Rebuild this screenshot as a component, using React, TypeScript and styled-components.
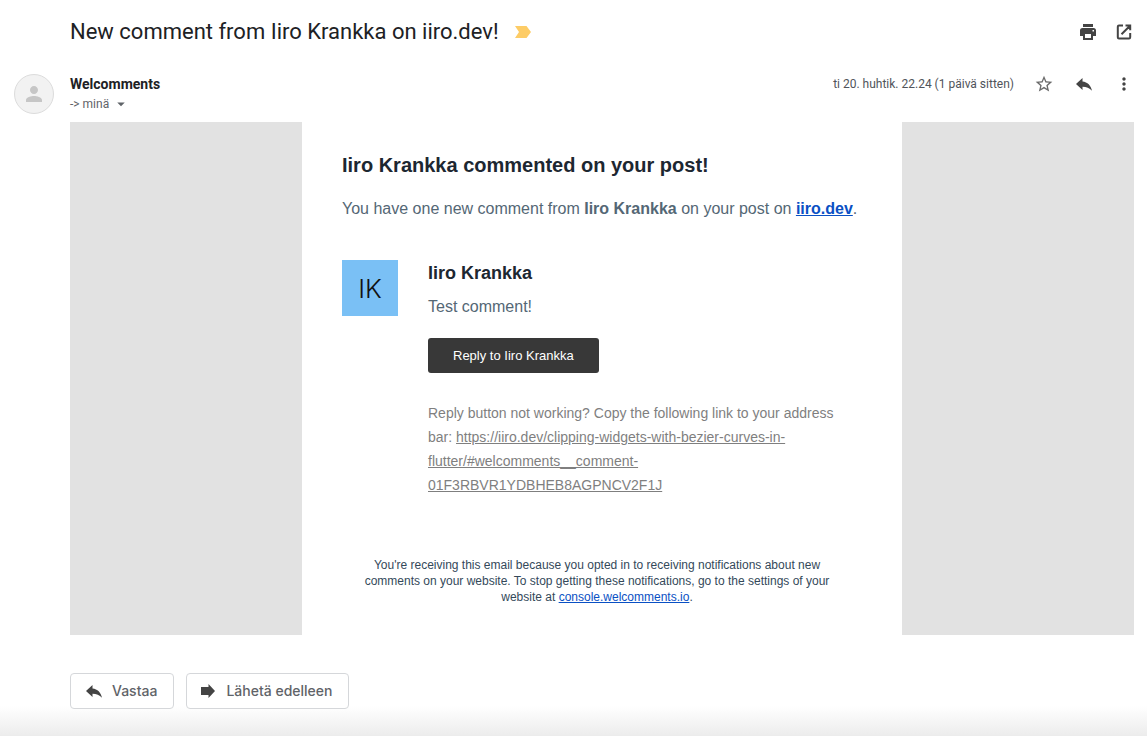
import React from "react";
import styled, { createGlobalStyle } from "styled-components";
import { MdArrowDropDown, MdMoreVert, MdPerson, MdStarBorder } from "react-icons/md";

const GlobalStyle = createGlobalStyle`
  *, *::before, *::after { box-sizing: border-box; }
  body {
    margin: 0;
    background: #fff;
    color: #202124;
    font-family: Roboto, "Liberation Sans", sans-serif;
  }
  h1, h2, h3, p { margin: 0; }
`;

const Page = styled.main`
  min-height: 100vh;
  display: flex;
  flex-direction: column;
`;

const SubjectBar = styled.header`
  display: flex;
  align-items: center;
  justify-content: space-between;
  padding: 16px 13px 0 70px;
`;

const Subject = styled.div`
  display: flex;
  align-items: center;
  gap: 16px;
`;

const SubjectText = styled.h1`
  font-size: 22px;
  font-weight: 400;
  line-height: 32px;
`;

const Actions = styled.div<{ $gap: number }>`
  display: flex;
  align-items: center;
  gap: ${(p) => p.$gap}px;
`;

const IconButton = styled.button`
  display: flex;
  padding: 0;
  border: 0;
  background: none;
  color: #444;
  cursor: pointer;
`;

const StarButton = styled(IconButton)`
  color: #6a6a6a;
`;

const Message = styled.article`
  display: grid;
  grid-template-columns: 40px minmax(0, 1fr);
  column-gap: 16px;
  padding: 26px 13px 0 14px;
`;

const Avatar = styled.div`
  display: flex;
  align-items: center;
  justify-content: center;
  width: 40px;
  height: 40px;
  border: 1px solid #dcdcdc;
  border-radius: 50%;
  background: #f2f2f2;
  color: #c6c6c6;
`;

const MessageHead = styled.div`
  display: flex;
  justify-content: space-between;
  align-items: flex-start;
  height: 48px;
`;

const Sender = styled.h2`
  font-size: 14px;
  font-weight: 700;
  line-height: 20px;
`;

const Recipient = styled.button`
  display: flex;
  align-items: center;
  gap: 3px;
  padding: 0;
  border: 0;
  background: none;
  color: #5f6368;
  font: 400 12px/20px Roboto, sans-serif;
  cursor: pointer;
`;

const Meta = styled.div`
  display: flex;
  align-items: center;
  gap: 20px;
  height: 20px;
`;

const DateText = styled.time`
  color: #50545a;
  font-size: 12px;
  line-height: 20px;
`;

const MailCanvas = styled.div`
  display: flex;
  justify-content: center;
  background: #e2e2e2;
  font-family: "Liberation Sans", Arial, sans-serif;
`;

const MailBody = styled.div`
  width: 100%;
  max-width: 600px;
  padding: 28px 40px 30px;
  background: #fff;
`;

const MailTitle = styled.h1`
  color: #1d2731;
  font-size: 20px;
  line-height: 30px;
`;

const Copy = styled.p`
  color: #546775;
  font-size: 16px;
  line-height: 24px;
`;

const Intro = styled(Copy)`
  margin-top: 17px;
`;

const Link = styled.a`
  color: #0a50c4;
`;

const Comment = styled.section`
  display: grid;
  grid-template-columns: 56px minmax(0, 1fr);
  column-gap: 30px;
  padding: 39px 18px 0 0;
`;

const Initials = styled.div`
  display: flex;
  align-items: center;
  justify-content: center;
  height: 56px;
  padding-top: 2px;
  background: #7ac0f5;
  color: #111;
  font: 300 26px/32px Inter, sans-serif;
`;

const Author = styled.h3`
  color: #1d2731;
  font-size: 18px;
  line-height: 26px;
`;

const CommentText = styled(Copy)`
  margin-top: 9px;
`;

const ReplyLink = styled.a`
  display: inline-block;
  margin-top: 19px;
  padding: 0 25px;
  border-radius: 3px;
  background: #383838;
  color: #fff;
  font-size: 13px;
  line-height: 35px;
  text-decoration: none;
`;

const Fallback = styled.p`
  margin-top: 28px;
  color: #7f7f7f;
  font-size: 14px;
  line-height: 24px;

  a { color: inherit; }
`;

const Footnote = styled.p`
  margin-top: 60px;
  padding: 0 25px 0 15px;
  color: #34495a;
  font-size: 12px;
  line-height: 16px;
  text-align: center;
`;

const Footer = styled.footer`
  display: flex;
  flex: 1;
  align-items: flex-start;
  gap: 12px;
  padding: 38px 13px 27px 70px;
  background: linear-gradient(to top, #ececec, #fff 30px);
`;

const ActionButton = styled.button`
  display: flex;
  align-items: center;
  gap: 8px;
  height: 36px;
  padding: 0 16px 0 13px;
  border: 1px solid #d5d7da;
  border-radius: 4px;
  background: #fff;
  color: #5f6368;
  font: 500 14px/20px Inter, sans-serif;
  cursor: pointer;
`;

const PrintIcon = () => (
  <svg width="20" height="20" viewBox="0 0 20 20" fill="#444" fillRule="evenodd" aria-hidden="true">
    <path d="M5 2h10v3H5zM4.500 6h11A2.500 2.500 0 0 1 18 8.500V14h-3v4H5v-4H2V8.500A2.500 2.500 0 0 1 4.500 6zM7 12v4h6v-4zM14.500 8v1.500H16V8z" />
  </svg>
);

const OpenIcon = () => (
  <svg width="20" height="20" viewBox="0 0 20 20" fill="none" stroke="#444" strokeWidth="2" aria-hidden="true">
    <path d="M9 3.500H5A1.200 1.200 0 0 0 3.800 4.700v10.600A1.200 1.200 0 0 0 5 16.500h10a1.200 1.200 0 0 0 1.200-1.200V11M11.500 3.500h4.700v4.700M16 3.700 7.500 12.200" />
  </svg>
);

const ReplyIcon = () => (
  <svg width="20" height="20" viewBox="0 0 20 20" fill="#444" aria-hidden="true">
    <path d="M2 10 8.500 4v3.500C13.500 8 17 11.500 18 16.800c-2.500-2.700-5.500-4-9.500-4V16z" />
  </svg>
);

const ForwardIcon = () => (
  <svg width="18" height="20" viewBox="0 0 18 20" fill="#444" aria-hidden="true">
    <path d="M1 6h7.500V3l6.500 7-6.500 7v-3H1z" />
  </svg>
);

const ImportantIcon = () => (
  <svg width="16" height="12" viewBox="0 0 16 12" fill="#fdcc66" role="img" aria-label="Tärkeä">
    <path d="M0 0h11.500L16 6l-4.500 6H0l4-6z" />
  </svg>
);

export default function App() {
  return (
    <Page>
      <GlobalStyle />
      <SubjectBar>
        <Subject>
          <SubjectText>New comment from Iiro Krankka on iiro.dev!</SubjectText>
          <ImportantIcon />
        </Subject>
        <Actions $gap={16}>
          <IconButton aria-label="Tulosta"><PrintIcon /></IconButton>
          <IconButton aria-label="Avaa uudessa ikkunassa"><OpenIcon /></IconButton>
        </Actions>
      </SubjectBar>

      <Message>
        <Avatar><MdPerson size={24} /></Avatar>
        <div>
          <MessageHead>
            <div>
              <Sender>Welcomments</Sender>
              <Recipient>-&gt; minä <MdArrowDropDown size={18} /></Recipient>
            </div>
            <Meta>
              <DateText>ti 20. huhtik. 22.24 (1 päivä sitten)</DateText>
              <Actions $gap={20}>
                <StarButton aria-label="Lisää tähti"><MdStarBorder size={20} /></StarButton>
                <IconButton aria-label="Vastaa"><ReplyIcon /></IconButton>
                <IconButton aria-label="Lisää"><MdMoreVert size={20} /></IconButton>
              </Actions>
            </Meta>
          </MessageHead>

          <MailCanvas>
            <MailBody>
              <MailTitle>Iiro Krankka commented on your post!</MailTitle>
              <Intro>
                You have one new comment from <strong>Iiro Krankka</strong> on your post on{" "}
                <Link href="#post"><strong>iiro.dev</strong></Link>.
              </Intro>
              <Comment>
                <Initials>IK</Initials>
                <div>
                  <Author>Iiro Krankka</Author>
                  <CommentText>Test comment!</CommentText>
                  <ReplyLink href="#reply">Reply to Iiro Krankka</ReplyLink>
                  <Fallback>
                    Reply button not working? Copy the following link to your address bar:{" "}
                    <a href="#comment">
                      https://iiro.dev/clipping-widgets-with-bezier-curves-in-flutter/#welcomments__comment-01F3RBVR1YDBHEB8AGPNCV2F1J
                    </a>
                  </Fallback>
                </div>
              </Comment>
              <Footnote>
                You're receiving this email because you opted in to receiving notifications about new comments on your
                website. To stop getting these notifications, go to the settings of your website at{" "}
                <Link href="#console">console.welcomments.io</Link>.
              </Footnote>
            </MailBody>
          </MailCanvas>
        </div>
      </Message>

      <Footer>
        <ActionButton><ReplyIcon />Vastaa</ActionButton>
        <ActionButton><ForwardIcon />Lähetä edelleen</ActionButton>
      </Footer>
    </Page>
  );
}
